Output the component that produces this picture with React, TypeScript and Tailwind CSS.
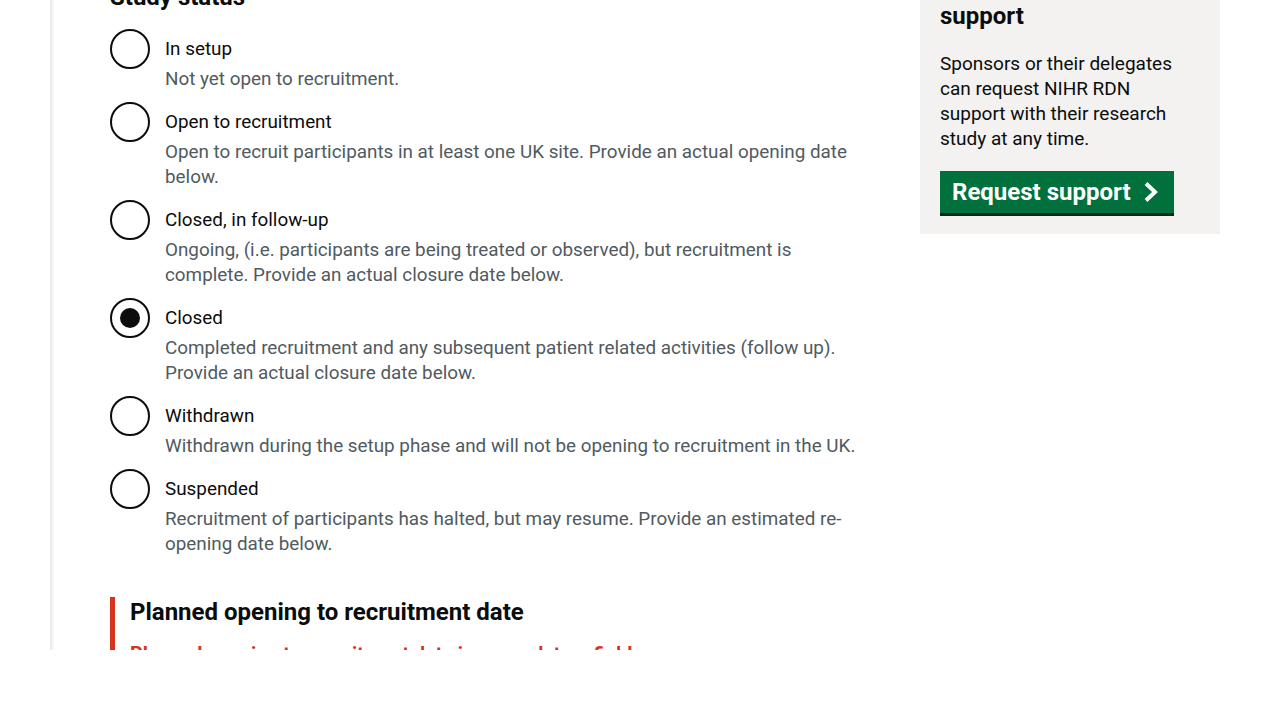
import React from 'react';

type Status = {
  value: string;
  label: string;
  hint: string;
};

const statuses: Status[] = [
  { value: 'setup', label: 'In setup', hint: 'Not yet open to recruitment.' },
  {
    value: 'open',
    label: 'Open to recruitment',
    hint: 'Open to recruit participants in at least one UK site. Provide an actual opening date below.',
  },
  {
    value: 'followup',
    label: 'Closed, in follow-up',
    hint: 'Ongoing, (i.e. participants are being treated or observed), but recruitment is complete. Provide an actual closure date below.',
  },
  {
    value: 'closed',
    label: 'Closed',
    hint: 'Completed recruitment and any subsequent patient related activities (follow up). Provide an actual closure date below.',
  },
  {
    value: 'withdrawn',
    label: 'Withdrawn',
    hint: 'Withdrawn during the setup phase and will not be opening to recruitment in the UK.',
  },
  {
    value: 'suspended',
    label: 'Suspended',
    hint: 'Recruitment of participants has halted, but may resume. Provide an estimated re-opening date below.',
  },
];

function Radio({ status, checked }: { status: Status; checked: boolean }) {
  return (
    <div className="flex mb-[10px]">
      <div className="w-10 h-10 shrink-0 rounded-full border-2 border-[#0b0c0c] flex items-center justify-center">
        {checked && <div className="w-5 h-5 rounded-full bg-[#0b0c0c]" />}
      </div>
      <div className="pl-[15px] pt-[8px]">
        <div className="text-[18.85px] leading-[25px] text-[#0b0c0c]">{status.label}</div>
        <div className="mt-[5px] text-[18.85px] leading-[25px] text-[#505a5f]">{status.hint}</div>
      </div>
    </div>
  );
}

export default function App() {
  const selected = 'closed';

  return (
    <div className="w-full h-[720px] bg-white font-['Roboto','Liberation_Sans',sans-serif]">
      <div className="h-[650px] ml-[50px] overflow-hidden border-l-2 border-[#ececec] shadow-[inset_3px_0_3px_-2px_rgba(0,0,0,0.06)]">
        <div className="flex items-start -mt-[49px] pl-[58px]">
          <div className="w-[760px] pt-[31px]">
            <h2 className="text-[24px] leading-[30px] font-bold text-[#0b0c0c] mb-[17px]">Study status</h2>
            <div>
              {statuses.map((s) => (
                <Radio key={s.value} status={s} checked={s.value === selected} />
              ))}
            </div>
            <div className="mt-[40px] border-l-[5px] border-[#d4351c] pl-[15px]">
              <h3 className="text-[24px] leading-[30px] font-bold text-[#0b0c0c]">
                Planned opening to recruitment date
              </h3>
              <p className="mt-[15px] text-[19.7px] leading-[25px] font-bold text-[#d4351c]">
                Planned opening to recruitment date is a mandatory field
              </p>
            </div>
          </div>

          <div className="ml-[50px] w-[300px] bg-[#f3f2f1] px-5 pt-5 pb-[21px]">
            <h2 className="text-[24px] leading-[30px] font-bold text-[#0b0c0c] mb-[20px]">
              Get NIHR RDN
              <br />
              support
            </h2>
            <p className="text-[19px] leading-[25px] text-[#0b0c0c] pr-3">
              Sponsors or their delegates can request NIHR RDN support with their research study at any time.
            </p>
            <button className="mt-[20px] inline-flex items-center h-[42px] pl-3 pr-[14px] bg-[#00703c] shadow-[0_3px_0_#002d18] text-white text-[24px] font-bold">
              Request support
              <svg className="ml-3" width="17" height="22" viewBox="0 0 17 22" fill="none">
                <path d="M3 2.5l9 8.5-9 8.5" stroke="white" strokeWidth="4" />
              </svg>
            </button>
          </div>
        </div>
      </div>
    </div>
  );
}
